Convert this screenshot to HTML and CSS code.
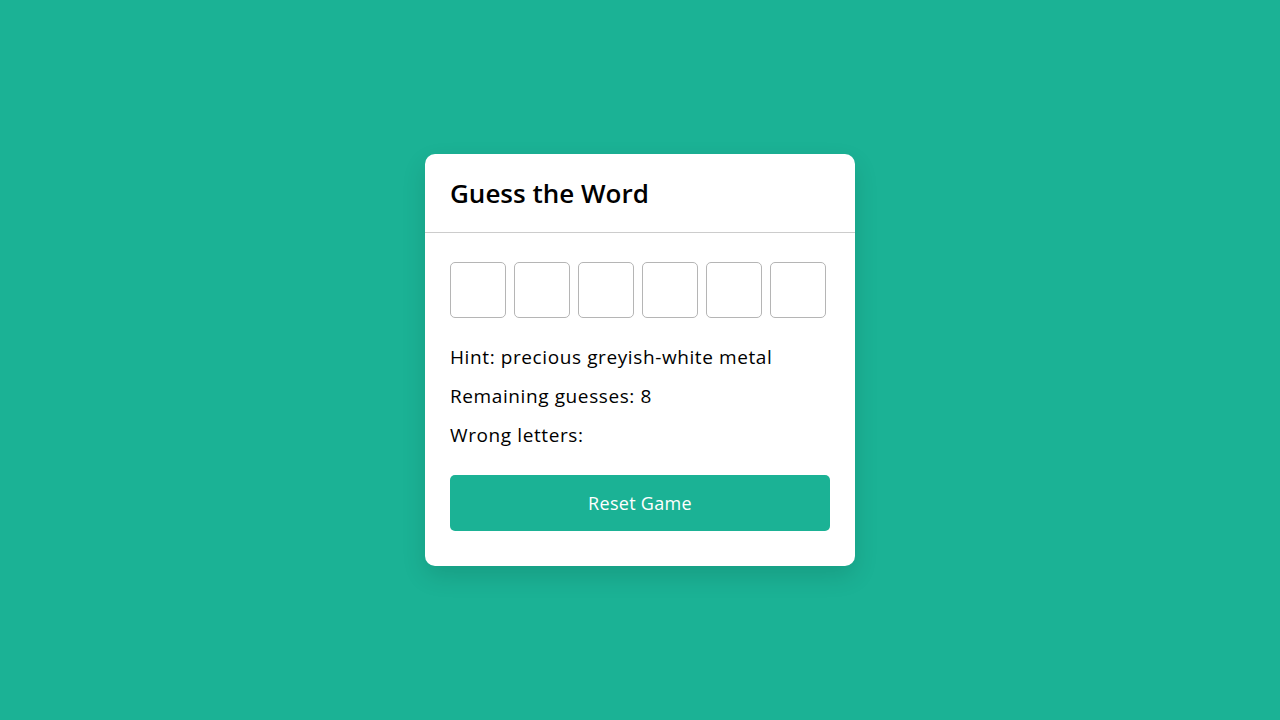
FILE: index.html
```html
<!DOCTYPE html>
<html lang="en">
<head>
<meta charset="utf-8">
<title>Guess the Word</title>
<link rel="stylesheet" href="styles.css">
</head>
<body>
<div class="wrapper">
  <header class="card-header"><h1>Guess the Word</h1></header>
  <div class="content">
    <div class="inputs">
      <input type="text" disabled>
      <input type="text" disabled>
      <input type="text" disabled>
      <input type="text" disabled>
      <input type="text" disabled>
      <input type="text" disabled>
    </div>
    <div class="details">
      <p>Hint: <span>precious greyish-white metal</span></p>
      <p>Remaining guesses: <span>8</span></p>
      <p>Wrong letters: <span></span></p>
    </div>
    <button class="reset-btn">Reset Game</button>
  </div>
</div>
</body>
</html>
```

FILE: styles.css
```css
* { margin: 0; padding: 0; box-sizing: border-box; }
body {
  font-family: "Open Sans", "Noto Sans", sans-serif;
  background: #1bb295;
  min-height: 100vh;
  display: flex;
  align-items: center;
  justify-content: center;
}
.wrapper {
  width: 430px;
  background: #fff;
  border-radius: 10px;
  box-shadow: 0 10px 25px rgba(0, 0, 0, 0.12);
}
.card-header {
  height: 79px;
  display: flex;
  align-items: center;
  padding: 0 25px;
  border-bottom: 1px solid #cccccc;
}
.card-header h1 {
  font-size: 26px;
  font-weight: 600;
  color: #000;
}
.content {
  padding: 29px 25px 35px;
}
.inputs {
  display: flex;
  gap: 8px;
}
.inputs input {
  width: 56px;
  height: 56px;
  border: 1px solid #b5b5b5;
  border-radius: 5px;
  background: #fff;
  outline: none;
}
.details {
  margin-top: 26px;
  margin-bottom: 26px;
}
.details p {
  font-size: 19px;
  line-height: 27px;
  letter-spacing: 0.6px;
  margin-top: 12px;
  color: #000;
}
.details p:first-child {
  margin-top: 0;
}
.reset-btn {
  width: 100%;
  height: 56px;
  border: none;
  border-radius: 5px;
  background: #1bb295;
  color: #fff;
  font-family: inherit;
  font-size: 18px;
  letter-spacing: 0.3px;
  cursor: pointer;
}
```
